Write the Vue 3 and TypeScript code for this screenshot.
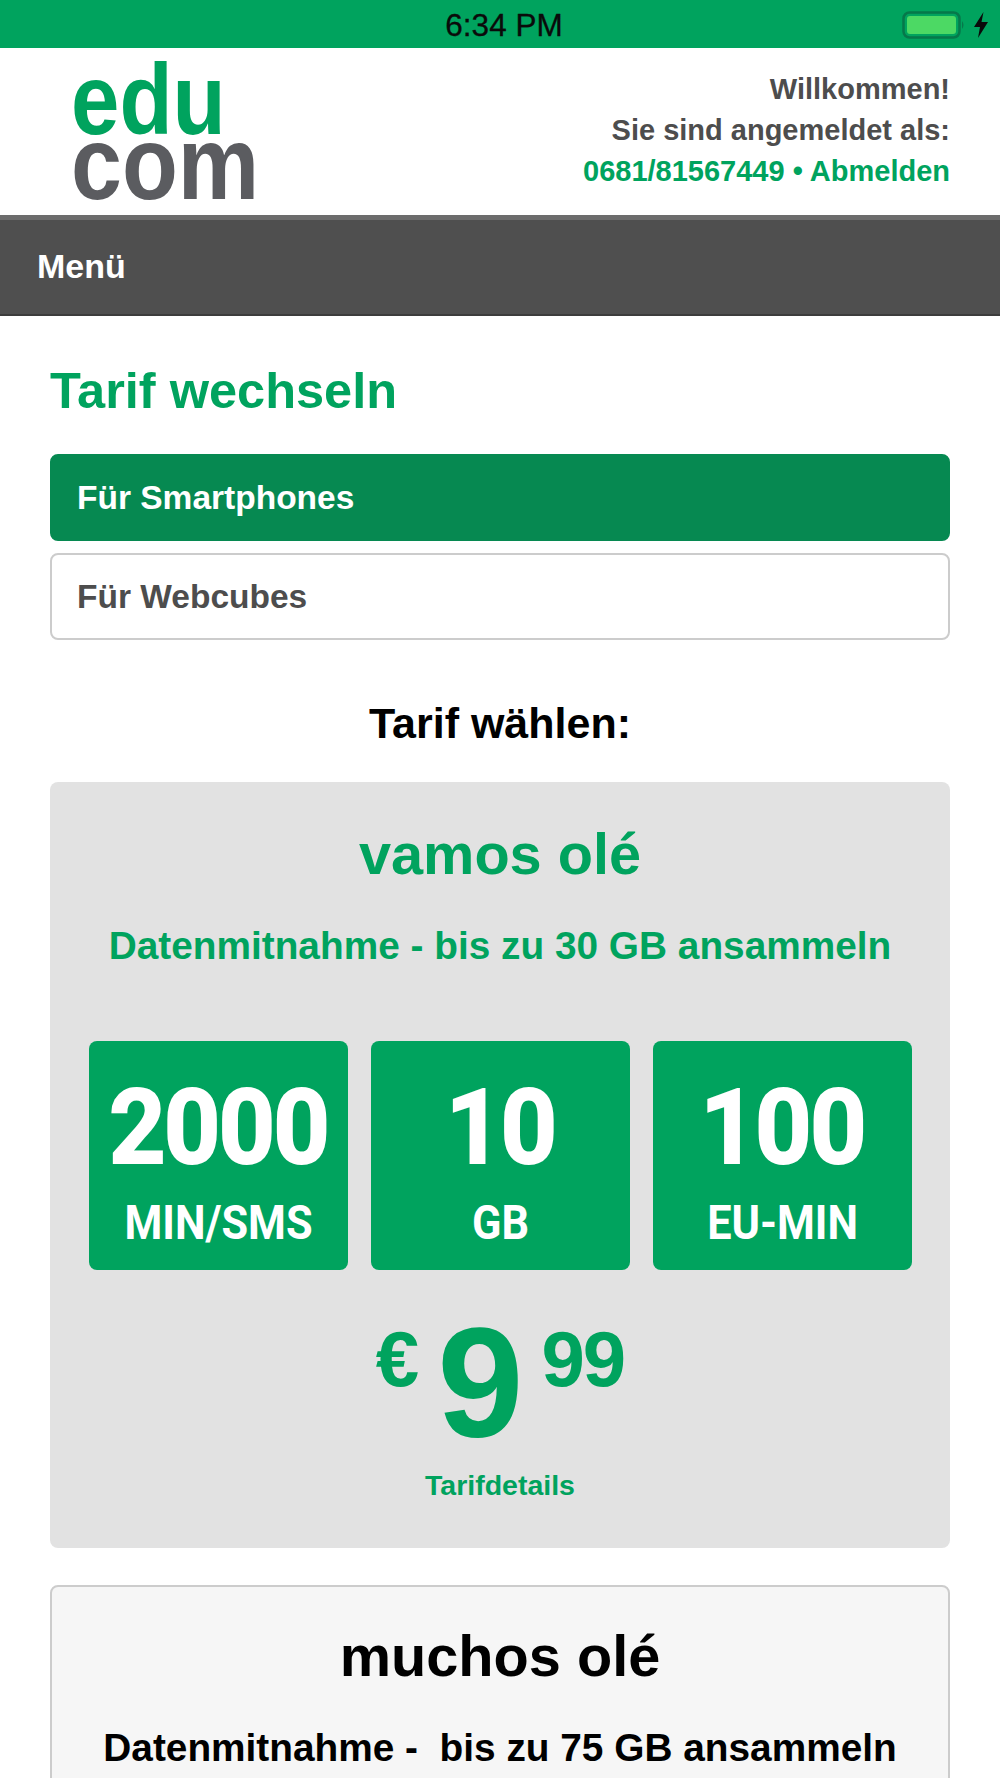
<template>
  <div class="page">
    <div class="status">
      <span class="time">6:34 PM</span>
      <div class="power">
        <svg width="64" height="28" viewBox="0 0 64 28">
          <rect x="1.5" y="1.5" width="56" height="25" rx="6" fill="none" stroke="#06784a" stroke-width="2.5" />
          <rect x="5" y="5" width="49" height="18" rx="3" fill="#4cd964" />
          <path d="M60 10 q3 4 0 8 z" fill="#06784a" />
        </svg>
        <svg width="16" height="26" viewBox="0 0 16 26">
          <path d="M10.5 0 L1 15 H7 L5 26 L15 10 H8.5 Z" fill="#0a0a0a" />
        </svg>
      </div>
    </div>

    <header class="top">
      <div class="logo">
        <span class="logo-edu">edu</span>
        <span class="logo-com">com</span>
      </div>
      <div class="user">
        <div>Willkommen!</div>
        <div>Sie sind angemeldet als:</div>
        <div class="user-link">0681/81567449 • Abmelden</div>
      </div>
    </header>

    <nav class="menu">Menü</nav>

    <main class="content">
      <h1 class="title">Tarif wechseln</h1>
      <div class="tab active">Für Smartphones</div>
      <div class="tab">Für Webcubes</div>

      <h2 class="choose">Tarif wählen:</h2>

      <section class="plan selected">
        <h3 class="plan-name">vamos olé</h3>
        <p class="plan-sub">Datenmitnahme - bis zu 30 GB ansammeln</p>
        <div class="tiles">
          <div v-for="t in tiles" :key="t.unit" class="tile">
            <div class="tile-num">{{ t.num }}</div>
            <div class="tile-unit">{{ t.unit }}</div>
          </div>
        </div>
        <div class="price">
          <span class="cur">€</span>
          <span class="euros">9</span>
          <span class="cents">99</span>
        </div>
        <a class="details">Tarifdetails</a>
      </section>

      <section class="plan other">
        <h3 class="plan-name">muchos olé</h3>
        <p class="plan-sub">Datenmitnahme -&nbsp; bis zu 75 GB ansammeln</p>
      </section>
    </main>
  </div>
</template>

<script setup lang="ts">
const tiles = [
  {num: '2000', unit: 'MIN/SMS'},
  {num: '10', unit: 'GB'},
  {num: '100', unit: 'EU-MIN'}
];
</script>

<style>
html, body {
  margin: 0;
  background: #fff;
}
</style>

<style scoped>
.page {
  width: 1000px;
  height: 1778px;
  overflow: hidden;
  font-family: "Liberation Sans", Arial, sans-serif;
  font-weight: bold;
  color: #4d4d4d;
}

.status {
  height: 48px;
  background: #00a35e;
  position: relative;
  display: flex;
  justify-content: center;
  align-items: center;
}

.time {
  font-weight: normal;
  font-size: 31.5px;
  padding: 2px 0 0 8px;
  color: #0a0a0a;
  -webkit-text-stroke: 0.3px #0a0a0a;
}

.power {
  position: absolute;
  right: 11px;
  top: 11px;
  display: flex;
  gap: 7px;
  align-items: center;
}

.top {
  height: 167px;
  display: flex;
  justify-content: space-between;
  padding: 0 50px 0 71px;
}

.logo {
  display: flex;
  flex-direction: column;
  padding-top: 19px;
  line-height: 65px;
}

.logo-edu {
  color: #00a35e;
  font-size: 100px;
  height: 65px;
  transform: scaleX(0.87);
  transform-origin: left;
}

.logo-com {
  color: #5b5c60;
  font-size: 104px;
  height: 65px;
  margin-top: -1px;
  transform: scaleX(0.88);
  transform-origin: left;
}

.user {
  text-align: right;
  font-size: 29px;
  line-height: 41px;
  padding-top: 21px;
}

.user-link {
  color: #00a35e;
}

.menu {
  height: 94px;
  border-top: 5px solid #6c6c6c;
  border-bottom: 2px solid #3c3c3c;
  background: #4f4f4f;
  color: #fff;
  font-size: 34px;
  line-height: 92px;
  padding-left: 37px;
}

.content {
  padding: 0 50px;
}

.title {
  margin: 48px 0 36px;
  font-size: 50.5px;
  line-height: 54px;
  color: #00a35e;
}

.tab {
  box-sizing: border-box;
  height: 87px;
  margin-bottom: 12px;
  border: 2px solid #ccc;
  border-radius: 8px;
  padding-left: 25px;
  font-size: 33.5px;
  line-height: 83px;
}

.tab.active {
  background: #068951;
  border-color: #068951;
  color: #fff;
}

.choose {
  margin: 59px 0 35px;
  text-align: center;
  font-size: 43px;
  line-height: 48px;
  color: #000;
}

.plan {
  box-sizing: border-box;
  border-radius: 8px;
  text-align: center;
}

.plan.selected {
  height: 766px;
  background: #e2e2e2;
  padding-top: 41px;
  color: #00a35e;
}

.plan.other {
  height: 400px;
  margin-top: 37px;
  background: #f6f6f6;
  border: 2px solid #ccc;
  padding-top: 38px;
  color: #000;
}

.plan-name {
  margin: 0;
  font-size: 57.7px;
  line-height: 62px;
}

.plan-sub {
  margin: 40px 0 0;
  font-size: 38.8px;
  line-height: 42px;
}

.tiles {
  display: flex;
  justify-content: center;
  gap: 23px;
  margin-top: 74px;
}

.tile {
  width: 259px;
  height: 229px;
  background: #00a35e;
  border-radius: 8px;
  color: #fff;
  font-family: Roboto, sans-serif;
}

.tile-num {
  font-size: 104px;
  line-height: 110px;
  margin-top: 32px;
  letter-spacing: -2px;
  transform: scaleX(0.95);
  -webkit-text-stroke: 2px #fff;
}

.tile-unit {
  font-size: 48px;
  line-height: 56px;
  margin-top: 12px;
  transform: scaleX(0.9);
}

.price {
  display: flex;
  justify-content: center;
  align-items: flex-start;
  height: 126px;
  margin-top: 57px;
  gap: 18px;
}

.cur {
  font-size: 78px;
  line-height: 60px;
  margin-top: 2px;
}

.euros {
  font-size: 155px;
  line-height: 112px;
}

.cents {
  font-size: 78px;
  line-height: 60px;
  letter-spacing: -2px;
  margin-top: 2px;
}

.details {
  display: block;
  margin-top: 16px;
  font-size: 28.5px;
  line-height: 32px;
}
</style>
